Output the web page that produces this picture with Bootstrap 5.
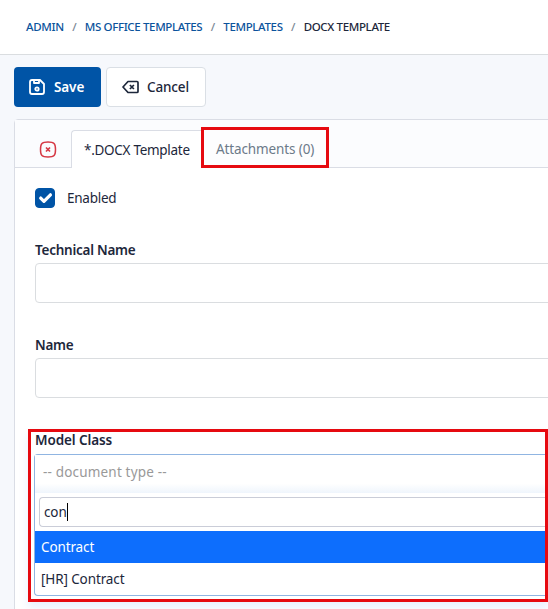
<!DOCTYPE html>
<html lang="en">
<head>
<meta charset="utf-8">
<meta name="viewport" content="width=device-width, initial-scale=1">
<title>DOCX Template</title>
<link href="https://cdn.jsdelivr.net/npm/bootstrap@5.3.0/dist/css/bootstrap.min.css" rel="stylesheet">
<style>
body{font-family:"Noto Sans","Open Sans",sans-serif;font-size:13.5px;line-height:20px;color:#1d273b;background:#f6f8fc;height:609px;overflow:hidden}
.topbar{height:55px;border-bottom:1px solid #dadde0;padding-left:26px}
.crumbs{font-size:11.5px;font-weight:500;letter-spacing:-.36px;--bs-breadcrumb-divider-color:#7b8794;--bs-breadcrumb-item-padding-x:8.5px;--bs-breadcrumb-item-active-color:#1d273b}
.crumbs a{color:#0b539c}
.toolbar{padding:12px 0 12px 14px;gap:5px}
.tool-btn{height:40px;font-size:13.5px;font-weight:600;border-radius:4px;padding:0 15px;line-height:20px}
.btn-save{width:87px;background:#0054a6;color:#fff;letter-spacing:-.1px}
.btn-cancel{width:100px;background:#fff;color:#1d273b;border:1px solid #dadfe5;font-weight:500;letter-spacing:-.15px}
.panel{width:560px;height:510px;margin-left:14px;border:1px solid #dadde5;border-radius:4px 0 0 0}
.tabs{height:48px;background:#fbfcfe;border-bottom:1px solid #dadde5;padding-left:24px}
.tab-active{width:131px;height:38px;margin-left:14px;margin-bottom:-1px;background:#fff;border:1px solid #dadde5;border-bottom:0;border-right:0;border-radius:4px 0 0 0;padding-left:12px;letter-spacing:-.29px}
.tab-marked{width:128px;height:41px;margin-left:-1px;margin-bottom:-1px;border:3px solid #e60a10;color:#6c7a89;padding:2px 0 0 12px;background:#fdfdfe;letter-spacing:-.12px}
.fields{padding:20px 0 0 20px}
.enabled-box.form-check-input{width:20px;height:20px;border-radius:4px;margin:0;background-color:#0054a6;border-color:#0054a6;background-size:120%}
.enabled-name{letter-spacing:-.25px}
.field-name{font-weight:600;line-height:20px;height:23px;letter-spacing:-.25px}
.field-box{height:40px;border:1px solid #dadde0;border-radius:4px;width:540px}
.field-box + .field-name{margin-top:32px}
.marked{width:520px;height:173px;margin:31px 0 0 -7px;border:3px solid #e60a10;padding:0 0 0 3px;box-shadow:0 6px 9px rgba(70,130,245,.12)}
.marked .field-name{height:22px;margin-left:1px;line-height:17px;letter-spacing:-.1px}
.picker{height:142px;border:1px solid #90b5e2;border-right:0;border-radius:4px 0 0 4px;letter-spacing:-.12px}
.picker-value{height:38px;color:#999;padding-left:8px;line-height:35px;background:linear-gradient(#fff 75%,#eff5fc);letter-spacing:.18px}
.search-box{height:30px;margin:4px 0 4px 4px;border:1px solid #cacdd8;border-right:0;border-radius:4px 0 0 4px;padding-left:4px}
.caret{width:1px;height:18px;background:#000}
.choice{height:32px;line-height:32px;padding-left:6px}
.choice-on{background:#0d6efd;color:#fff}
</style>
</head>
<body>
<header class="topbar bg-white d-flex align-items-center">
  <ol class="breadcrumb crumbs mb-0 flex-nowrap text-nowrap">
    <li class="breadcrumb-item"><a class="text-decoration-none" href="#">ADMIN</a></li>
    <li class="breadcrumb-item"><a class="text-decoration-none" href="#">MS OFFICE TEMPLATES</a></li>
    <li class="breadcrumb-item"><a class="text-decoration-none" href="#">TEMPLATES</a></li>
    <li class="breadcrumb-item active">DOCX TEMPLATE</li>
  </ol>
</header>
<div class="toolbar d-flex">
  <button class="btn tool-btn btn-save d-flex align-items-center border-0"><svg class="flex-shrink-0" width="17" height="18" viewBox="0 0 17 18" fill="none" stroke="currentColor" stroke-width="1.8" stroke-linejoin="round"><path d="M3 2h8l4 4v8q0 2-2 2H3q-2 0-2-2V4q0-2 2-2z"/><path d="M5 2v3h5V2"/><circle cx="8" cy="11" r="1.7"/></svg><span class="ms-2">Save</span></button>
  <button class="btn tool-btn btn-cancel d-flex align-items-center"><svg class="flex-shrink-0" width="17" height="14" viewBox="0 0 17 14" fill="none" stroke="currentColor" stroke-width="1.7" stroke-linejoin="round"><path d="M6 1.500h9q1 0 1 1v9q0 1-1 1H6L1 7z"/><path d="M7.900 5l4 4m0-4l-4 4"/></svg><span class="ms-2">Cancel</span></button>
</div>
<main class="panel bg-white">
  <div class="tabs d-flex align-items-end">
    <svg class="flex-shrink-0 mb-2 mt-1" width="18" height="19" viewBox="0 0 18 19" fill="none" stroke="#d63945" stroke-width="1.5"><path d="M9 2C15.200 2 16.500 3.300 16.500 9.500S15.200 17 9 17 1.500 15.700 1.500 9.500 2.800 2 9 2z"/><path d="M7 7.500l4 4m0-4l-4 4" stroke-width="1.700"/></svg>
    <div class="tab-active d-flex align-items-center text-nowrap">*.DOCX Template</div>
    <div class="tab-marked d-flex align-items-center text-nowrap">Attachments (0)</div>
  </div>
  <div class="fields">
    <div class="d-flex align-items-center mb-4 pb-2"><input id="enabled" class="form-check-input enabled-box" type="checkbox" checked><label for="enabled" class="enabled-name ms-2 ps-1">Enabled</label></div>
    <div class="field-name">Technical Name</div>
    <div class="field-box"></div>
    <div class="field-name">Name</div>
    <div class="field-box"></div>
    <section class="marked">
      <div class="field-name">Model Class</div>
      <div class="picker bg-white">
        <div class="picker-value">-- document type --</div>
        <div class="search-box d-flex align-items-center">con<span class="caret"></span></div>
        <div class="choice choice-on">Contract</div>
        <div class="choice">[HR] Contract</div>
      </div>
    </section>
  </div>
</main>
<script src="https://cdn.jsdelivr.net/npm/bootstrap@5.3.0/dist/js/bootstrap.bundle.min.js"></script>
</body>
</html>
